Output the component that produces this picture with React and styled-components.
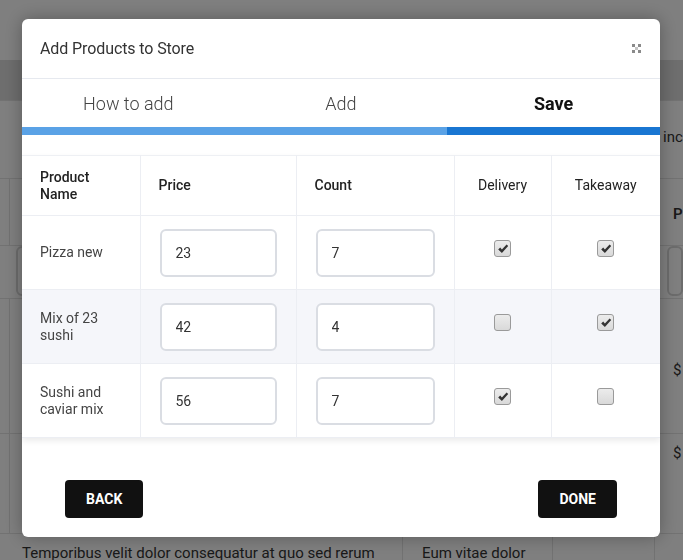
import styled, { createGlobalStyle } from "styled-components";

const GlobalStyle = createGlobalStyle`
  html, body {
    margin: 0;
    padding: 0;
  }
  body {
    font-family: Roboto, "Liberation Sans", sans-serif;
    background: #fff;
    overflow: hidden;
  }
`;

const products = [
    { name: "Pizza new", price: "23", count: "7", delivery: true, takeaway: true },
    { name: "Mix of 23 sushi", price: "42", count: "4", delivery: false, takeaway: true },
    { name: "Sushi and caviar mix", price: "56", count: "7", delivery: true, takeaway: false },
];

const steps = [
    { label: "How to add", done: true },
    { label: "Add", done: true },
    { label: "Save", active: true },
];

function Checkbox({ checked }) {
    return (
        <Box>
            {checked && (
                <svg width="12" height="12" viewBox="0 0 12 12">
                    <path d="M1.2 6.4 L3.2 4.6 L4.9 6.4 L9.6 1.4 L11.2 3 L4.9 10 Z" fill="#333" />
                </svg>
            )}
        </Box>
    );
}

function CloseIcon() {
    return (
        <svg width="9" height="9" viewBox="0 0 9 9">
            <g fill="#8a8a8a">
                <rect x="0" y="0" width="3" height="3" />
                <rect x="6" y="0" width="3" height="3" />
                <rect x="0" y="6" width="3" height="3" />
                <rect x="6" y="6" width="3" height="3" />
                <rect x="3" y="3" width="3" height="3" opacity="0.5" />
            </g>
        </svg>
    );
}

export default function App() {
    return (
        <>
            <GlobalStyle />
            <Page>
                <TopBar />
                <SubBar />
                <BgGrid>
                    <BgCell /><BgCell /><BgCell /><BgCell />
                    <BgCell $pad="27px 8px 0">inc</BgCell>

                    <BgCell $line /><BgCell /><BgCell /><BgCell />
                    <BgCell $pad="26px 8px 0 18px" $bold>P</BgCell>

                    <BgCell /><BgCell $pad="0 0 0 6px"><BgInput /></BgCell><BgCell /><BgCell />
                    <BgCell $pad="0 0 0 12px"><BgInput /></BgCell>

                    <BgCell $line /><BgCell /><BgCell /><BgCell />
                    <BgCell $pad="62px 0 0 18px">$</BgCell>

                    <BgCell $line /><BgCell /><BgCell /><BgCell />
                    <BgCell $pad="10px 0 0 18px">$</BgCell>

                    <BgCell />
                    <BgCell $pad="10px 12px 0">Temporibus velit dolor consequatur at quo sed rerum</BgCell>
                    <BgCell $pad="10px 19px 0">Eum vitae dolor</BgCell>
                    <BgCell /><BgCell />
                </BgGrid>
            </Page>

            <Overlay />

            <Modal>
                <Header>
                    <Title>Add Products to Store</Title>
                    <CloseButton><CloseIcon /></CloseButton>
                </Header>

                <Steps>
                    {steps.map(step => (
                        <Step key={step.label}>
                            <StepLabel $active={step.active}>{step.label}</StepLabel>
                            <StepBar $active={step.active} />
                        </Step>
                    ))}
                </Steps>

                <Content>
                    <Table>
                        <colgroup>
                            <col style={{ width: 118 }} />
                            <col style={{ width: 156 }} />
                            <col style={{ width: 158 }} />
                            <col style={{ width: 97 }} />
                            <col />
                        </colgroup>
                        <thead>
                            <tr>
                                <Th>Product<br />Name</Th>
                                <Th>Price</Th>
                                <Th>Count</Th>
                                <Th $center>Delivery</Th>
                                <Th $center>Takeaway</Th>
                            </tr>
                        </thead>
                        <tbody>
                            {products.map((p, i) => (
                                <Row key={p.name} $striped={i % 2 === 1}>
                                    <NameCell>{p.name}</NameCell>
                                    <Td><Input defaultValue={p.price} /></Td>
                                    <Td><Input defaultValue={p.count} /></Td>
                                    <Td $center><Checkbox checked={p.delivery} /></Td>
                                    <Td $center><Checkbox checked={p.takeaway} /></Td>
                                </Row>
                            ))}
                        </tbody>
                    </Table>
                </Content>

                <Footer>
                    <Button>BACK</Button>
                    <Button>DONE</Button>
                </Footer>
            </Modal>
        </>
    );
}

const Page = styled.div`
    height: 560px;
    overflow: hidden;
    color: #333;
    font-size: 15px;
`;

const TopBar = styled.div`
    height: 60px;
    background: #fff;
`;

const SubBar = styled.div`
    height: 40px;
    background: #dcdcdc;
`;

const BgGrid = styled.div`
    display: grid;
    grid-template-columns: 10px 393px 150px 102px 1fr;
    grid-template-rows: 78px 67px 53px 135px 100px 60px;
`;

const BgCell = styled.div`
    padding: ${p => p.$pad || "0"};
    border-top: 1px solid #e4e4e4;
    border-right: ${p => (p.$line ? "1px solid #e4e4e4" : "none")};
    font-weight: ${p => (p.$bold ? 600 : 400)};
    white-space: nowrap;
    overflow: hidden;
    display: flex;
    align-items: ${p => (p.$pad ? "flex-start" : "center")};

    &:nth-child(5n + 2),
    &:nth-child(5n + 3),
    &:nth-child(5n + 4) {
        border-right: 1px solid #e4e4e4;
    }
`;

const BgInput = styled.div`
    width: 100px;
    height: 46px;
    border: 2px solid #d8d8d8;
    border-radius: 6px;
`;

const Overlay = styled.div`
    position: fixed;
    inset: 0;
    background: rgba(0, 0, 0, 0.5);
`;

const Modal = styled.div`
    position: fixed;
    top: 19px;
    left: 22px;
    width: 638px;
    height: 518px;
    background: #fff;
    border-radius: 6px;
    box-shadow: 0 0 18px rgba(0, 0, 0, 0.3);
    display: flex;
    flex-direction: column;
    overflow: hidden;
`;

const Header = styled.div`
    height: 59px;
    flex-shrink: 0;
    padding: 0 19px 0 18px;
    display: flex;
    align-items: center;
    justify-content: space-between;
    border-bottom: 1px solid #e6e9ef;
`;

const Title = styled.h2`
    margin: 0;
    font-size: 16px;
    font-weight: 400;
    color: #333;
    letter-spacing: -0.1px;
`;

const CloseButton = styled.button`
    border: none;
    background: none;
    padding: 0;
    display: flex;
    cursor: pointer;
`;

const Steps = styled.div`
    display: grid;
    grid-template-columns: repeat(3, 1fr);
    flex-shrink: 0;
`;

const Step = styled.div`
    display: flex;
    flex-direction: column;
`;

const StepLabel = styled.div`
    height: 48px;
    padding-top: 1px;
    box-sizing: border-box;
    display: flex;
    align-items: center;
    justify-content: center;
    font-size: 18px;
    font-weight: ${p => (p.$active ? 700 : 300)};
    color: ${p => (p.$active ? "#111" : "#444")};
`;

const StepBar = styled.div`
    height: 8px;
    background: ${p => (p.$active ? "#1976d2" : "#5aa2e6")};
`;

const Content = styled.div`
    padding-top: 20px;
`;

const Table = styled.table`
    width: 100%;
    table-layout: fixed;
    border-collapse: collapse;
    box-shadow: 0 3px 6px rgba(0, 0, 0, 0.08);
    border-top: 1px solid #eef0f4;
    font-size: 14px;
`;

const Th = styled.th`
    height: 59px;
    padding: 0 18px;
    text-align: ${p => (p.$center ? "center" : "left")};
    font-weight: ${p => (p.$center ? 400 : 500)};
    color: #222;
    line-height: 17px;
    border-right: 1px solid #eceef3;
    border-bottom: 1px solid #eceef3;

    &:last-child {
        border-right: none;
    }
`;

const Row = styled.tr`
    background: ${p => (p.$striped ? "#f5f6fa" : "#fff")};
`;

const Td = styled.td`
    height: 73px;
    padding: 0 19px;
    text-align: ${p => (p.$center ? "center" : "left")};
    border-right: 1px solid #eceef3;
    border-bottom: 1px solid #eceef3;

    &:last-child {
        border-right: none;
    }
`;

const NameCell = styled(Td)`
    padding: 0 18px;
    color: #444;
    line-height: 17px;
`;

const Input = styled.input`
    width: 100%;
    height: 48px;
    box-sizing: border-box;
    border: 2px solid #dadde3;
    border-radius: 6px;
    padding: 0 14px;
    font-family: Roboto, "Liberation Sans", sans-serif;
    font-size: 14px;
    color: #333;
    background: #fff;
    outline: none;
`;

const Box = styled.span`
    display: inline-flex;
    align-items: center;
    justify-content: center;
    width: 15px;
    height: 15px;
    margin-bottom: 8px;
    vertical-align: middle;
    border: 1px solid #9a9a9a;
    border-radius: 3px;
    background: linear-gradient(#ececec, #d9d9d9);
`;

const Footer = styled.div`
    margin-top: auto;
    padding: 0 43px 19px;
    display: flex;
    justify-content: space-between;
`;

const Button = styled.button`
    height: 38px;
    padding: 0 21px;
    border: none;
    border-radius: 4px;
    background: #111;
    color: #fff;
    font-family: Roboto, "Liberation Sans", sans-serif;
    font-size: 14px;
    font-weight: 700;
    cursor: pointer;
`;
